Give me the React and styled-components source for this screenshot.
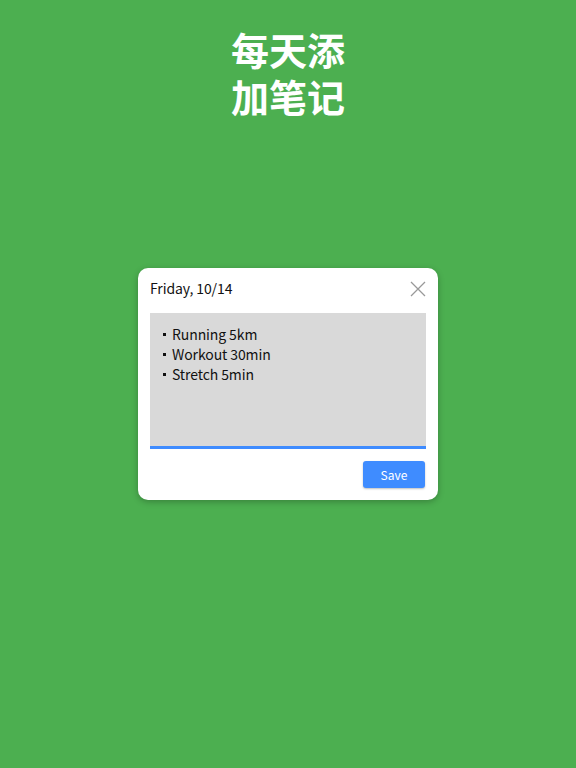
import React, { useState } from 'react';
import styled, { createGlobalStyle } from 'styled-components';

const GlobalStyle = createGlobalStyle`
  html, body {
    margin: 0;
    padding: 0;
    background: #4caf50;
    font-family: "Noto Sans CJK SC", "Noto Sans", sans-serif;
  }
`;

const Page = styled.div`
  width: 576px;
  height: 768px;
  background: #4caf50;
  display: flex;
  flex-direction: column;
  align-items: center;
  padding-top: 25px;
  box-sizing: border-box;
`;

const Title = styled.h1`
  margin: 0;
  color: #ffffff;
  font-size: 38px;
  line-height: 47px;
  font-weight: 700;
  text-align: center;
  width: 120px;
`;

const Card = styled.div`
  margin-top: 149px;
  width: 300px;
  background: #ffffff;
  border-radius: 10px;
  box-shadow: 0 2px 6px rgba(0, 0, 0, 0.25);
  padding: 0 12px 12px;
  box-sizing: border-box;
`;

const Header = styled.div`
  display: flex;
  align-items: center;
  justify-content: space-between;
  height: 45px;
  padding-bottom: 6px;
  box-sizing: border-box;
`;

const DateLabel = styled.span`
  font-size: 14px;
  letter-spacing: -0.1px;
  color: #111111;
`;

const CloseButton = styled.button`
  border: none;
  background: none;
  padding: 0;
  width: 16px;
  height: 16px;
  margin-top: 2px;
  cursor: pointer;
  display: flex;
`;

const NoteArea = styled.div`
  height: 136px;
  background: #d9d9d9;
  border-bottom: 3px solid #3f8cff;
  padding: 11px 12px;
  box-sizing: border-box;
`;

const NoteLine = styled.div`
  display: flex;
  align-items: center;
  font-size: 14px;
  letter-spacing: -0.1px;
  line-height: 20px;
  color: #111111;
`;

const Bullet = styled.span`
  width: 3px;
  height: 3px;
  background: #111111;
  margin: 0 6px 0 1px;
  flex-shrink: 0;
`;

const Footer = styled.div`
  display: flex;
  justify-content: flex-end;
  margin-top: 12px;
`;

const SaveButton = styled.button`
  width: 62px;
  height: 27px;
  border: none;
  border-radius: 3px;
  background: #3f8cff;
  color: #ffffff;
  font-family: inherit;
  font-size: 12px;
  box-shadow: 0 1px 2px rgba(0, 0, 0, 0.25);
  margin-right: 1px;
  cursor: pointer;
`;

const notes = ['Running 5km', 'Workout 30min', 'Stretch 5min'];

export default function App() {
  const [items] = useState(notes);
  return (
    <>
      <GlobalStyle />
      <Page>
        <Title>每天添加笔记</Title>
        <Card>
          <Header>
            <DateLabel>Friday, 10/14</DateLabel>
            <CloseButton aria-label="close">
              <svg width="16" height="16" viewBox="0 0 16 16">
                <path d="M1 1L15 15M15 1L1 15" stroke="#999999" strokeWidth="1.3" fill="none" />
              </svg>
            </CloseButton>
          </Header>
          <NoteArea>
            {items.map((t) => (
              <NoteLine key={t}>
                <Bullet />
                {t}
              </NoteLine>
            ))}
          </NoteArea>
          <Footer>
            <SaveButton>Save</SaveButton>
          </Footer>
        </Card>
      </Page>
    </>
  );
}
